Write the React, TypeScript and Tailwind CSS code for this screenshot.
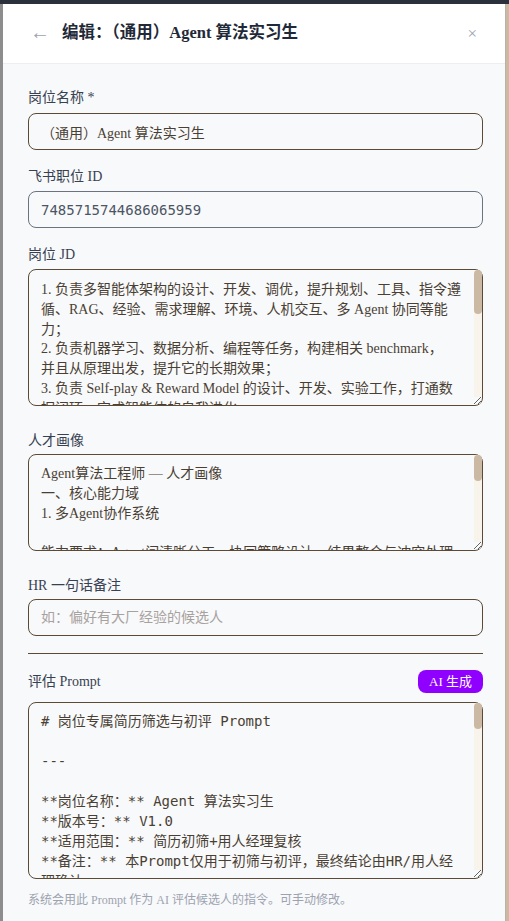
import React from "react";

const serif = "font-['Liberation_Serif','Noto_Sans_CJK_SC',serif]";
const mono = "font-['DejaVu_Sans_Mono','Noto_Sans_CJK_SC',monospace]";

const jdText =
  "1. 负责多智能体架构的设计、开发、调优，提升规划、工具、指令遵循、RAG、经验、需求理解、环境、人机交互、多 Agent 协同等能力；\n2. 负责机器学习、数据分析、编程等任务，构建相关 benchmark，\n并且从原理出发，提升它的长期效果；\n3. 负责 Self-play & Reward Model 的设计、开发、实验工作，打通数据闭环，完成智能体的自我进化。";

const profileText =
  "Agent算法工程师 — 人才画像\n一、核心能力域\n1. 多Agent协作系统\n\n能力要求：Agent间清晰分工、协同策略设计、结果整合与冲突处理\n典型信号：多智能体项目经验";

const promptText =
  "# 岗位专属简历筛选与初评 Prompt\n\n---\n\n**岗位名称：** Agent 算法实习生\n**版本号：** V1.0\n**适用范围：** 简历初筛+用人经理复核\n**备注：** 本Prompt仅用于初筛与初评，最终结论由HR/用人经理确认\n\n---\n\n## 一、角色";

function Label({ children }: { children: React.ReactNode }) {
  return (
    <div className="h-5 text-[14px] leading-5 text-[#374151]">{children}</div>
  );
}

// fake scrollbar drawn over the textarea's right edge
function ScrollArea({
  value,
  heightClass,
  thumbClass,
  textClass,
  className,
}: {
  value: string;
  heightClass: string;
  thumbClass: string;
  textClass: string;
  className: string;
}) {
  return (
    <div className={`relative ${className}`}>
      <textarea
        defaultValue={value}
        className={`block w-full resize-y overflow-hidden rounded-lg border border-[#5a4a36] bg-[#f8f9fb] pl-3 pr-5 text-[14px] text-[#4a3f33] outline-none ${heightClass} ${textClass}`}
      />
      <div className="pointer-events-none absolute bottom-[9px] right-[1px] top-[1px] w-2 rounded-tr-md bg-[#f8f4ec]">
        <div className={`w-2 rounded-full bg-[#cbb9a4] ${thumbClass}`} />
      </div>
    </div>
  );
}

export default function App() {
  return (
    <div className={`flex h-[921px] flex-col overflow-hidden ${serif}`}>
      <div className="h-[4px] bg-[#2a303c]" />
      <div className="flex flex-1">
        <div className="w-[3px] bg-[#8d8d8d]" />
        <div className="flex flex-1 flex-col">
          <div className="flex h-[60px] items-center border-b border-[#eceef1] bg-white pl-[27px] pr-[28px]">
            <span className="mb-[4px] text-[20px] leading-none text-[#9ca3af]">←</span>
            <h1 className="ml-[12px] text-[16.5px] font-bold text-[#1f2937]">
              编辑：（通用）Agent 算法实习生
            </h1>
            <span className="ml-auto text-[17px] leading-none text-[#9ca3af]">×</span>
          </div>
          <div className="flex flex-1 flex-col bg-[#f8f9fb] pl-[25px] pr-[22px] pt-6">
            <Label>岗位名称 *</Label>
            <input
              defaultValue="（通用）Agent 算法实习生"
              className="mt-[5px] h-[37px] w-full rounded-lg border border-[#5a4a36] bg-[#f8f9fb] px-3 text-[14px] text-[#4a3f33] outline-none"
            />

            <div className="mt-[17px]">
              <Label>飞书职位 ID</Label>
            </div>
            <input
              defaultValue="7485715744686065959"
              className={`mt-1 h-[37px] w-full rounded-lg border border-[#6b7280] bg-[#f8f9fb] px-3 text-[14px] text-[#4b5563] outline-none ${mono}`}
            />

            <div className="mt-[17px]">
              <Label>岗位 JD</Label>
            </div>
            <ScrollArea
              value={jdText}
              className="mt-1"
              heightClass="h-[137px]"
              thumbClass="h-[44px]"
              textClass="py-[10px] leading-[19.8px]"
            />

            <div className="mt-[25px]">
              <Label>人才画像</Label>
            </div>
            <ScrollArea
              value={profileText}
              className="mt-[3px]"
              heightClass="h-[97px]"
              thumbClass="h-[26px]"
              textClass="py-[9px] leading-[19.8px]"
            />

            <div className="mt-[25px]">
              <Label>HR 一句话备注</Label>
            </div>
            <input
              placeholder="如：偏好有大厂经验的候选人"
              className="mt-[3px] h-[37px] w-full rounded-lg border border-[#5a4a36] bg-[#f8f9fb] px-3 text-[14px] text-[#4a3f33] outline-none placeholder:text-[#a8a29e]"
            />

            <div className="mt-[17px] h-px bg-[#5a4a36]" />

            <div className="mt-[16px] flex items-center justify-between">
              <Label>评估 Prompt</Label>
              <button className="h-[23px] rounded-lg bg-[#8f00ff] px-[11px] text-[13px] leading-none text-white">
                AI 生成
              </button>
            </div>
            <ScrollArea
              value={promptText}
              className="mt-[9px]"
              heightClass="h-[177px]"
              thumbClass="h-[26px]"
              textClass={`py-[8px] leading-[20px] ${mono}`}
            />
            <p className="mt-[12px] text-[12px] text-[#9ca3af]">
              系统会用此 Prompt 作为 AI 评估候选人的指令。可手动修改。
            </p>
          </div>
        </div>
        <div className="w-[4px] border-l border-[#b9b2a8] bg-[#cdb9a3]" />
      </div>
    </div>
  );
}
